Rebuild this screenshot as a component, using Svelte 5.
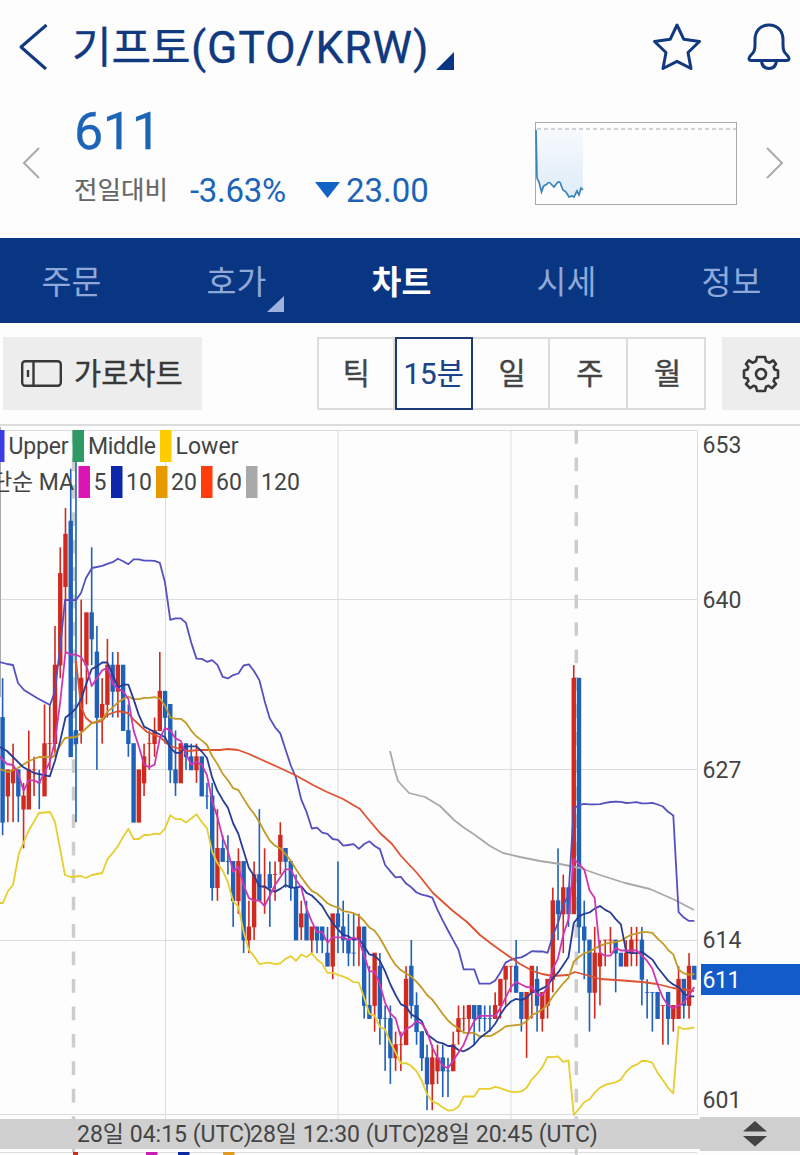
<script lang="ts">
  type Candle = [up: number, high: number, top: number, bottom: number, low: number];

  const tabs = [
    { label: '주문' },
    { label: '호가', more: true },
    { label: '차트', active: true },
    { label: '시세' },
    { label: '정보' }
  ];
  const periods = ['틱', '15분', '일', '주', '월'];
  let period = '15분';

  // [up, high, body top, body bottom, low], prices are offset by 600
  const candles: Candle[] = [
    [0,34,31,23,22],[1,27,27,25,23],[1,29,27,26,23],[0,27,27,25,23],[1,26,25,24,21],[1,30,27,24,24],
    [1,28,27,27,25],[0,27,26,26,24],[1,32,29,25,25],[1,32,29,29,27],[1,38,35,29,28],[1,44,42,35,34],
    [1,47,45,41,36],[0,50,46,28,28],[0,51,30,29,23],[1,40,34,30,29],[1,39,39,35,32],[0,44,39,37,35],
    [0,38,36,31,27],[1,34,32,31,29],[1,37,35,32,31],[0,36,35,33,31],[1,36,35,33,31],[0,35,35,30,30],
    [0,32,30,29,28],[0,29,29,23,23],[1,27,27,23,23],[1,29,28,26,25],[1,30,29,29,27],[1,31,30,29,28],
    [1,36,33,30,30],[0,33,33,31,29],[0,32,32,27,26],[0,30,27,26,25],[1,29,29,26,26],[0,29,29,28,27],
    [0,29,28,27,27],[1,29,28,27,26],[0,28,28,25,25],[0,26,25,25,24],[0,26,25,18,17],[1,24,21,18,17],
    [0,22,21,20,20],[0,22,20,20,19],[0,20,20,17,15],[1,21,20,17,16],[0,20,20,14,13],[1,17,15,14,13],
    [1,20,19,15,14],[0,24,19,17,17],[1,21,18,18,16],[0,20,19,18,15],[1,20,19,19,17],[1,23,22,20,19],
    [0,21,21,20,18],[0,20,20,18,17],[0,19,18,14,14],[1,17,16,15,14],[0,17,16,14,14],[1,15,15,14,13],
    [0,15,15,14,13],[0,15,15,14,13],[0,15,13,12,12],[1,16,16,12,11],[0,20,16,15,13],[0,17,15,14,13],
    [0,16,14,13,12],[0,16,13,13,12],[1,16,15,14,12],[0,15,15,9,8],[0,12,9,8,8],[1,13,13,9,7],
    [0,13,12,8,6],[0,9,8,8,4],[0,9,8,5,3],[1,7,6,5,4],[1,7,6,6,4],[1,12,11,6,6],
    [0,14,12,9,8],[0,10,9,7,6],[0,7,7,5,4],[0,6,5,3,1],[1,6,5,3,1],[1,6,5,4,3],
    [0,6,5,4,2],[0,5,4,4,2],[1,7,6,4,4],[1,9,8,7,6],[1,9,8,8,7],[1,9,9,8,7],
    [0,9,9,8,6],[0,9,9,8,7],[0,9,8,8,7],[0,9,8,8,7],[1,10,9,8,8],[1,11,11,9,8],
    [1,12,12,11,9],[1,12,12,12,10],[0,14,12,10,10],[0,10,10,8,7],[1,10,10,8,5],[1,12,12,10,8],
    [0,12,11,9,7],[1,10,10,8,7],[1,11,11,9,8],[1,18,17,11,10],[0,21,17,16,14],[1,19,18,16,13],
    [0,18,18,16,15],[1,35,34,16,16],[0,34,34,15,13],[0,17,15,14,11],[0,14,14,10,7],[1,15,13,10,8],
    [1,14,13,12,9],[1,14,14,14,12],[1,15,14,14,13],[0,14,14,13,10],[0,13,13,12,12],[1,14,13,12,12],
    [1,15,14,13,12],[1,15,14,14,12],[0,15,14,11,9],[0,11,10,10,8],[0,10,10,10,7],[0,10,10,8,8],
    [1,9,9,9,6],[0,10,10,8,6],[1,9,9,8,7],[1,12,11,8,8],[0,11,11,9,8],[1,13,12,9,8],
    [0,12,12,11,11]
  ];

  const TOP = 427;
  const x = (i: number) => 2.6 + i * 5.24;
  const y = (p: number) => 940 - TOP - (p - 14) * 13.09;

  const closes = candles.map(c => (c[0] ? c[2] : c[3]));

  // band = number of standard deviations away from the average
  function average(n: number, band = 0): string {
    const pts: string[] = [];
    for (let i = n - 1; i < closes.length; i++) {
      const win = closes.slice(i - n + 1, i + 1);
      const mean = win.reduce((a, b) => a + b, 0) / n;
      const dev = Math.sqrt(win.reduce((a, b) => a + (b - mean) ** 2, 0) / n);
      pts.push(`${x(i).toFixed(1)},${y(mean + dev * band).toFixed(1)}`);
    }
    return pts.join(' ');
  }

  // the first points come from bars that are scrolled out on the left
  const lines = [
    { color: '#a9a9a9', points: '390,324 395,344 398,354 409,366 425,370 440,379 454,393 463,400 475,408 490,419 503,426 520,430 540,434 560,437 580,441 600,448 625,456 650,462 675,473 694,483' },
    { color: '#e6ce30', points: '0,476 3,476 8,464 13,458 19,426 29,403 39,386 50,385 55,395 65,448 71,450 81,449 86,451 92,448 ' + average(20, -2) },
    { color: '#5550c0', points: '0,235 7,237 13,238 18,256 24,263 37,271 50,278 55,264 62,203 65,173 76,173 81,166 86,151 92,141 ' + average(20, 2) },
    { color: '#dd5230', points: '76,233 81,280 86,291 92,296 102,294 107,288 118,284 128,286 134,293 147,305 160,310 170,319 187,324 200,323 220,323 228,322 238,323 249,327 260,332 280,341 295,348 313,358 327,365 343,372 360,382 369,393 380,406 392,417 401,429 417,446 433,466 453,484 467,495 480,508 493,518 507,528 520,537 533,544 542,547 553,549 568,548 575,545 590,549 600,552 616,553 642,555 657,557 673,561 694,564' },
    { color: '#c39a24', points: '0,342 8,345 18,341 29,334 39,330 53,330 65,311 76,310 81,306 92,296 ' + average(20) },
    { color: '#273c94', points: '0,320 7,324 13,330 23,340 34,346 ' + average(10) },
    { color: '#cc38b4', points: '0,330 7,337 13,338 18,346 ' + average(5) }
  ];

  const prices = [
    { text: '653', y: 453 }, { text: '640', y: 608 }, { text: '627', y: 778 },
    { text: '614', y: 948 }, { text: '601', y: 1108 }
  ];
  const bands = [
    { x: -7, color: '#3c3ce6', text: 'Upper', w: 60 },
    { x: 72.5, color: '#2f9a66', text: 'Middle', w: 68 },
    { x: 160, color: '#ffcc00', text: 'Lower', w: 63 }
  ];
  const averages = [
    { x: 78.5, color: '#dc14b4', text: '5', w: 12 },
    { x: 111, color: '#0c28a8', text: '10', w: 26 },
    { x: 156, color: '#e69a00', text: '20', w: 26 },
    { x: 201, color: '#ff3c0a', text: '60', w: 26 },
    { x: 246, color: '#a9a9a9', text: '120', w: 39 }
  ];
  const times = ['28일 04:15 (UTC)', '28일 12:30 (UTC)', '28일 20:45 (UTC)'];
</script>

<div class="screen">
  <header>
    <svg class="back" width="34" height="50" viewBox="0 0 34 50">
      <path d="M29.5 3 L4 25 L29 47" />
    </svg>
    <h1><span class="ko">기프토</span><span class="pair">(GTO/KRW)</span></h1>
    <svg class="corner" width="18" height="18"><path d="M18 0V18H0Z" /></svg>
    <svg class="icon star" width="50" height="50" viewBox="0 0 50 50">
      <path d="M25 3 L31.8 17.3 L47.5 19.5 L36 30.5 L39 46.5 L25 39.3 L11 46.5 L14 30.5 L2.5 19.5 L18.2 17.3Z" />
    </svg>
    <svg class="icon" width="46" height="50" viewBox="0 0 46 50">
      <path d="M23 3C14 3 9 9.5 9 18V23C9 29 7.5 30.5 5 33C2 36 2.5 38.5 5.5 38.5H40.5C43.5 38.5 44 36 41 33C38.5 30.5 37 29 37 23V18C37 9.5 32 3 23 3Z" />
      <path d="M15.5 39C16 44 19 46.5 23 46.5S30 44 30.5 39" />
    </svg>
  </header>

  <section class="quote">
    <svg class="arrow" width="20" height="34" viewBox="0 0 20 34"><path d="M18 2 L3 17 L18 32" /></svg>
    <div class="numbers">
      <div class="price">611</div>
      <div class="change">
        <span class="label">전일대비</span>
        <span class="rate">-3.63%</span>
        <svg width="25" height="16"><path d="M0 0H25L12.5 16Z" /></svg>
        <span class="diff">23.00</span>
      </div>
    </div>
    <svg class="spark" width="202" height="83" viewBox="0 0 202 83">
      <defs>
        <linearGradient id="fade" x1="0" y1="0" x2="0" y2="1">
          <stop offset="0" stop-color="#f7fafd" />
          <stop offset="1" stop-color="#deebf8" />
        </linearGradient>
      </defs>
      <path fill="url(#fade)" d="M1 7 L2.5 58 L6.5 70 L13.5 61 L19.5 65 L25 60 L34 76 L42 70 L48 68 V7Z" />
      <rect class="frame" x="0.5" y="0.5" width="201" height="82" />
      <path class="limit" d="M2 7H201" />
      <path class="trend" d="M1 8 L2 56 L4 60 L6.5 70 L8.5 64 L12 62 Q14 59 16 62 L19 65 L22 61 Q25 58 26 63 L28 68 L31 70 L34 75 L37 74 L39 75 L42 69 L44 73 L46 66 L48 68" />
    </svg>
    <svg class="arrow" width="20" height="34" viewBox="0 0 20 34"><path d="M2 2 L17 17 L2 32" /></svg>
  </section>

  <nav>
    {#each tabs as tab}
      <div class="tab" class:active={tab.active}>
        {tab.label}
        {#if tab.more}
          <svg class="more" width="17" height="16"><path d="M17 0V16H0Z" /></svg>
        {/if}
      </div>
    {/each}
  </nav>

  <div class="toolbar">
    <button class="wide">
      <svg width="41" height="27" viewBox="0 0 41 27">
        <rect x="1.2" y="1.2" width="38.6" height="24.6" rx="3" />
        <path d="M12.5 1V26M7 10V17" />
      </svg>
      <span>가로차트</span>
    </button>
    <div class="periods">
      {#each periods as p}
        <button class:on={p === period} on:click={() => (period = p)}><span>{p}</span></button>
      {/each}
    </div>
    <button class="settings" aria-label="설정">
      <svg width="40" height="40" viewBox="-20 -20 40 40">
        <path d="M-4 -17H4L5 -12.8L8.5 -11.3L12.2 -13.7L15 -10L12.6 -7L13.5 -4.5L17 -3.5V3.5L13.5 4.5L12.6 7L15 10L11 14.2L7.5 11.8L5 12.8L4 17H-4L-5 12.8L-7.5 11.8L-11 14.2L-15 10L-12.6 7L-13.5 4.5L-17 3.5V-3.5L-13.5 -4.5L-12.6 -7L-15 -10L-12.2 -13.7L-8.5 -11.3L-5 -12.8Z" />
        <circle r="5" />
      </svg>
    </button>
  </div>

  <svg class="chart" width="800" height="692" viewBox="0 0 800 692">
    <g class="grid">
      <path d="M0 3.5H697.5V687.5H0M0 172.5H697M0 342.5H697M0 513.5H697M165.5 4V692M338 4V692M511 4V692" />
      <path class="edge" d="M0.5 0V270" />
      <path class="day" d="M73.5 3V692M576.3 3V692" />
    </g>

    {#each candles as [up, high, top, bottom, low], i}
      <g class={up ? 'up' : 'down'}>
        <rect x={x(i) - 0.8} y={y(high)} width="1.6" height={y(low) - y(high)} />
        <rect x={x(i) - 2.2} y={y(top) - 0.4} width="4.4" height={y(bottom) - y(top) + 0.8} />
      </g>
    {/each}

    {#each lines as line}
      <polyline points={line.points} stroke={line.color} />
    {/each}

    {#each bands as b}
      <rect x={b.x} y="3" width="11.5" height="32" fill={b.color} />
      <text x={b.x + 15.5} y="27" textLength={b.w}>{b.text}</text>
    {/each}
    <text x="-9" y="63" textLength="83">단순 MA</text>
    {#each averages as a}
      <rect x={a.x} y="39" width="11.5" height="32" fill={a.color} />
      <text x={a.x + 15} y="63" textLength={a.w}>{a.text}</text>
    {/each}

    {#each prices as p}
      <text x="702.5" y={p.y - TOP} textLength="39">{p.text}</text>
    {/each}
    <rect x="701" y="537" width="99" height="31" fill="#125bc8" />
    <text class="now" x="702.5" y="561" textLength="38">611</text>
  </svg>

  <div class="timeline">
    <div class="times">
      {#each times as t}
        <span>{t}</span>
      {/each}
    </div>
    <div class="resize">
      <svg width="24" height="26"><path d="M12 0L24 10.5H0ZM0 15H24L12 25.5Z" /></svg>
    </div>
  </div>

  <svg class="next" width="800" height="6">
    <path d="M0 3.5H697" stroke="#ddd" />
    <rect x="73" y="3" width="5" height="3" fill="#d02a20" />
    <rect x="146" y="3" width="11.5" height="3" fill="#c81eb4" />
    <rect x="178" y="3" width="11.5" height="3" fill="#0c28a0" />
    <rect x="223" y="3" width="11.5" height="3" fill="#e09a20" />
    <path d="M73.5 0V3M576.3 0V6" stroke="#ccc" stroke-width="3" />
  </svg>
</div>

<style>
:global(body) {
  margin: 0;
  background: #fdfdfd;
}

.screen {
  width: 800px;
  height: 1155px;
  overflow: hidden;
  font-family: Roboto, 'Noto Sans CJK KR', sans-serif;
  color: #444;
}

svg {
  display: block;
  flex: none;
}

button {
  padding: 0;
  border: 0;
  background: none;
  font: inherit;
  color: inherit;
}

header {
  display: flex;
  align-items: center;
  height: 94px;
  padding-left: 17px;
}

.back path,
.icon path {
  fill: none;
  stroke: #11397f;
  stroke-width: 3;
  stroke-linejoin: round;
}

h1 {
  display: flex;
  align-items: center;
  width: 364px;
  height: 60px;
  margin: 2px 0 0 21px;
  font-size: 44.5px;
  font-weight: 400;
  line-height: 60px;
  color: #11397f;
  white-space: nowrap;
  -webkit-text-stroke: 0.3px #11397f;
}

.ko {
  width: 119px;
  font-size: 43px;
}

.pair { letter-spacing: 0.8px; }

.corner { margin: 27px 0 0 0; }
.corner path { fill: #083683; }

.star { margin: 0 44px 0 198px; }

.quote {
  display: flex;
  height: 144px;
  padding-left: 21px;
}

.arrow {
  margin-top: 52px;
}

.arrow path {
  fill: none;
  stroke: #aaa;
  stroke-width: 2;
}

.numbers {
  flex: none;
  width: 461px;
  margin-left: 33px;
  color: #1c64b8;
}

.price {
  height: 76px;
  font-size: 52px;
  line-height: 76px;
  letter-spacing: -0.4px;
  -webkit-text-stroke: 0.3px #1c64b8;
}

.change {
  display: flex;
  align-items: center;
  height: 40px;
  font-size: 33px;
}

.label {
  width: 116px;
  font-size: 25.5px;
  line-height: 34px;
  color: #666;
  -webkit-text-stroke: 0.2px #666;
}

.rate {
  width: 125px;
  letter-spacing: -0.3px;
}

.change svg { fill: #1263c4; }

.diff {
  margin-left: 6px;
}

.spark { margin: 28px 28px 0 0; }
.frame { fill: none; stroke: #aaa; }
.limit { stroke: #c4c4c4; stroke-width: 1.5; stroke-dasharray: 4 3; }
.trend { fill: none; stroke: #3a83b8; stroke-width: 1.7; }

nav {
  display: flex;
  height: 84.5px;
  background: #083683;
}

.tab {
  position: relative;
  flex: none;
  width: 165px;
  font-size: 32.5px;
  line-height: 90px;
  text-align: center;
  color: #8fa8d8;
}

.tab:first-child {
  width: 143px;
  margin-right: 11px;
}

.tab.active {
  font-weight: 700;
  color: #fff;
}

.more {
  position: absolute;
  right: 35px;
  bottom: 11px;
  fill: #9db2dd;
}

.toolbar {
  display: flex;
  height: 73px;
  margin-bottom: 1px;
  padding: 14.5px 0 14px 3px;
  border-bottom: 2px solid #dcdcdc;
}

.wide {
  display: flex;
  align-items: center;
  gap: 12px;
  width: 199px;
  padding-left: 18px;
  background: #ededed;
  font-size: 29.5px;
  color: #383838;
}

.wide svg {
  fill: none;
  stroke: #383838;
  stroke-width: 2.4;
}

.wide span,
.periods span {
  display: block;
  padding-bottom: 5px;
  -webkit-text-stroke: 0.4px currentColor;
}

.periods {
  display: flex;
  width: 389px;
  margin-left: 115px;
  box-shadow: inset 0 0 0 2px #dcdcdc;
}

.periods button {
  width: 77.8px;
  padding-left: 3px;
  border-right: 2px solid #dcdcdc;
  font-size: 29.5px;
}

.periods button.on {
  padding-left: 0;
  border: 2.5px solid #1c3a74;
  color: #1c4287;
  white-space: nowrap;
}

.periods .on span {
  margin: 0 -4px;
  -webkit-text-stroke-width: 0.2px;
}

.settings {
  display: flex;
  align-items: center;
  width: 78px;
  margin-left: 16px;
  padding-left: 19px;
  box-sizing: border-box;
  background: #ededed;
}

.settings svg {
  fill: none;
  stroke: #383838;
  stroke-width: 2.6;
  stroke-linejoin: round;
}

.chart {
  font-size: 23px;
  fill: #444;
}

.grid path {
  fill: none;
  stroke: #dcdcdc;
}

.grid .edge { stroke: #aaa; }

.grid .day {
  stroke: #cdcdcd;
  stroke-width: 3.5;
  stroke-dasharray: 13.7 13.75;
}

.up { fill: #d02a20; }
.down { fill: #1f60b8; }
.now { fill: #fff; }

polyline {
  fill: none;
  stroke-width: 1.8;
  stroke-linejoin: round;
}

.timeline {
  display: flex;
  align-items: center;
  height: 30px;
}

.times {
  display: flex;
  width: 623px;
  height: 30px;
  padding-left: 77px;
  background: #d0d0d0;
  font-size: 23px;
  line-height: 31px;
  white-space: nowrap;
}

.times span {
  width: 173px;
}

.resize {
  display: flex;
  align-items: center;
  width: 100px;
  height: 34px;
  padding-left: 43px;
  box-sizing: border-box;
  background: #d0d0d0;
  fill: #444;
}
</style>
